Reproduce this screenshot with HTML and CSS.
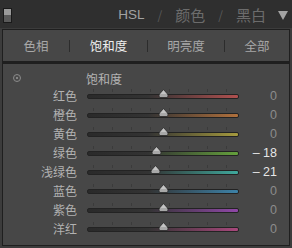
FILE: index.html
```html
<!DOCTYPE html>
<html lang="zh">
<head>
    <meta charset="UTF-8">
    <title>HSL</title>
    <link rel="stylesheet" href="styles.css">
</head>
<body>
    <div class="header">
        <span class="switch"></span>
        <div class="modes">
            <span class="mode active">HSL</span>
            <span class="slash">/</span>
            <span class="mode">颜色</span>
            <span class="slash">/</span>
            <span class="mode">黑白</span>
            <span class="arrow"></span>
        </div>
    </div>

    <div class="tabs">
        <span class="tab">色相</span>
        <span class="tab current">饱和度</span>
        <span class="tab">明亮度</span>
        <span class="tab">全部</span>
    </div>

    <div class="panel">
        <div class="panel-head">
            <span class="target"></span>
            <span class="panel-title">饱和度</span>
        </div>
        <div id="rows"></div>
    </div>

    <script>
        // Slider data: label, value, track colour
        const sliders = [
            { name: "红色", value: 0, color: "#b0504f" },
            { name: "橙色", value: 0, color: "#b0703c" },
            { name: "黄色", value: 0, color: "#a59a3e" },
            { name: "绿色", value: -18, color: "#64a03c" },
            { name: "浅绿色", value: -21, color: "#3fa89c" },
            { name: "蓝色", value: 0, color: "#3d82a8" },
            { name: "紫色", value: 0, color: "#9048a8" },
            { name: "洋红", value: 0, color: "#a8487c" }
        ];
        const rows = document.getElementById('rows');

        sliders.forEach(s => {
            const row = document.createElement('div');
            row.className = 'row';
            const pos = 50 + s.value / 4; // percent along track (range -100..100)
            const text = s.value === 0 ? '0' : '\u2013 ' + Math.abs(s.value);
            row.innerHTML =
                '<span class="label">' + s.name + '</span>' +
                '<span class="slider">' +
                    '<span class="track" style="--c:' + s.color + '"></span>' +
                    '<svg class="thumb" style="left:' + pos + '%" width="11" height="10" viewBox="0 0 11 10">' +
                        '<path d="M5.5 0.5 L9.5 5 Q10.5 6.5 9.5 8.5 L1.5 8.5 Q0.5 6.5 1.5 5 Z" fill="#a8a8a8" stroke="#2a2a2a" stroke-width="0.8"/>' +
                        '<path d="M5.5 1.5 L8.5 5 L2.5 5 Z" fill="#c4c4c4"/>' +
                    '</svg>' +
                '</span>' +
                '<span class="value' + (s.value !== 0 ? ' changed' : '') + '">' + text + '</span>';
            rows.appendChild(row);
        });
    </script>
</body>
</html>
```

FILE: styles.css
```css
/* General */
body {
    margin: 0;
    width: 292px;
    height: 248px;
    background: #3c3c3c;
    font-family: "Noto Sans CJK SC", "Liberation Sans", sans-serif;
    overflow: hidden;
}

/* Header with HSL / 颜色 / 黑白 */
.header {
    height: 28px;
    background: #2f2f2f;
    display: flex;
    align-items: center;
    justify-content: space-between;
    padding: 0 4px 0 3px;
    box-sizing: border-box;
}

.switch {
    width: 7px;
    height: 13px;
    border: 1px solid #1a1a1a;
    background: linear-gradient(#9a9a9a 0 45%, #5a5a5a 45% 100%);
    margin-top: 3px;
}

.modes {
    display: flex;
    align-items: center;
    font-size: 15px;
    color: #6c6c6c;
}

.mode.active {
    font-family: "Liberation Sans", sans-serif;
    font-size: 13.5px;
    color: #a2a2a2;
}

.slash {
    margin: 0 13px;
    font-size: 12px;
    color: #5a5a5a;
}

.arrow {
    margin-left: 12px;
    margin-top: 2px;
    width: 0;
    height: 0;
    border-left: 5px solid transparent;
    border-right: 5px solid transparent;
    border-top: 9px solid #a4a4a4;
}

/* Tab row */
.tabs {
    margin: 1px 2px 0;
    height: 31px;
    background: #474747;
    border: 1px solid #1f1f1f;
    display: grid;
    grid-template-columns: 66px 78px 77px 1fr;
    align-items: center;
    font-size: 12.5px;
    color: #a8a8a8;
}

.tab {
    text-align: center;
    border-left: 1px solid #2c2c2c;
    line-height: 12px;
}

.tab:first-child {
    border-left: none;
}

.tab.current {
    color: #efefef;
}

/* Slider panel */
.panel {
    margin: 0 2px;
    height: 181px;
    background: #474747;
    border: 1px solid #1f1f1f;
    border-top-width: 2px;
}

.panel-head {
    display: flex;
    align-items: center;
    height: 22px;
    padding-top: 6px;
    box-sizing: border-box;
}

.target {
    width: 6px;
    height: 6px;
    border-radius: 50%;
    border: 1px solid #8a8a8a;
    margin-left: 10px;
    position: relative;
    background: #4a4a4a;
}

.target::after {
    content: "";
    position: absolute;
    left: 2px;
    top: 2px;
    width: 2px;
    height: 2px;
    border-radius: 50%;
    background: #9a9a9a;
}

.panel-title {
    margin-left: 65px;
    font-size: 12px;
    color: #b4b4b4;
}

.row {
    display: grid;
    grid-template-columns: 74px 152px 1fr;
    column-gap: 10px;
    align-items: center;
    height: 19px;
}

.label {
    text-align: right;
    font-size: 12px;
    color: #b2b2b2;
}

.slider {
    position: relative;
    height: 19px;
    background: repeating-linear-gradient(90deg, #3b3b3b 0 1px, transparent 1px 19px) 6px 3px / 140px 3px no-repeat;
}

.track {
    position: absolute;
    left: 0;
    right: 0;
    top: 8px;
    height: 3px;
    border-radius: 2px;
    border: 1px solid #232323;
    background: linear-gradient(90deg, #2a2a2a, #333 40%, var(--c));
}

.thumb {
    position: absolute;
    top: 3px;
    margin-left: -5.5px;
}

.value {
    text-align: right;
    padding-right: 12px;
    font-family: "Liberation Sans", sans-serif;
    font-size: 12.5px;
    color: #8c8c8c;
}

.value.changed {
    color: #e6e6e6;
}
```
